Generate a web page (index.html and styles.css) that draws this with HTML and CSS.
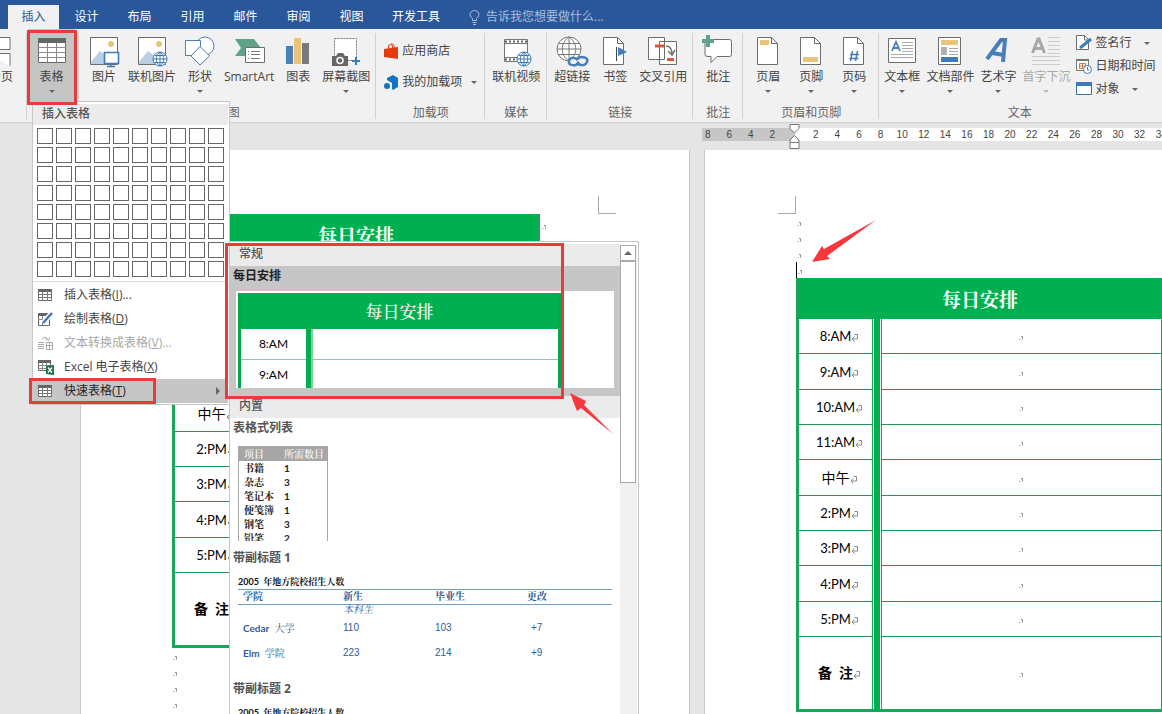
FILE: index.html
```html
<!DOCTYPE html>
<html lang="zh-CN">
<head>
<meta charset="utf-8">
<title>插入表格</title>
<link rel="stylesheet" href="styles.css">
</head>
<body>
<svg class="defs" aria-hidden="true">
  <symbol id="ret" viewBox="0 0 7 9"><path d="M3.500 1.500h3v4.500h-5M3.500 3.500L1 6l2.500 2.500" fill="none" stroke="#8a8a8a"/></symbol>
  <symbol id="mark" viewBox="0 0 5 5"><path d="M2 .5h1.500v3M.5 3.500h1" fill="none" stroke="#8f8f8f"/></symbol>
  <symbol id="globe" viewBox="0 0 16 16"><circle cx="8" cy="8" r="7" fill="#fff"/><path d="M8 1a7 7 0 1 0 0 14a7 7 0 1 0 0-14zM8 1v14M1 8h14M2.500 4.500h11M2.500 11.500h11M8 1c-5 4-5 10 0 14M8 1c5 4 5 10 0 14" fill="none" stroke="currentColor"/></symbol>
  <symbol id="bigglobe" viewBox="0 0 26 26"><circle cx="13" cy="13" r="12" fill="#fff"/><path d="M13 1a12 12 0 1 0 0 24a12 12 0 1 0 0-24zM13 1v24M1 13h24M3 7.500h20M3 18.500h20M13 1c-9 6-9 18 0 24M13 1c9 6 9 18 0 24" fill="none" stroke="currentColor"/></symbol>
  <symbol id="page" viewBox="0 0 30 30"><path d="M4.500.5h14l6 6v21h-20z" fill="#fff" stroke="#6d6d6d"/><path d="M18.500.5v6h6" fill="none" stroke="#6d6d6d"/></symbol>
  <symbol id="grid" viewBox="0 0 14 12"><path d="M.5.5h13v11H.5z" fill="#fff" stroke="#666"/><path d="M0 0h14v3H0z" fill="#666"/><path d="M4.500 3v9M9.500 3v9M0 5.500h14M0 8.500h14" stroke="#777"/></symbol>
  <symbol id="photo" viewBox="0 0 30 30"><path d="M1.500.5h27v27h-27z" fill="#fff" stroke="#6d6d6d"/><circle cx="22" cy="7" r="3" fill="#ebc47a"/><path d="M2 25l9-11 8 6v7H2z" fill="#b9cfe6"/></symbol>
</svg>

<nav class="tabs">
  <button class="tab active">插入</button>
  <button class="tab">设计</button>
  <button class="tab">布局</button>
  <button class="tab">引用</button>
  <button class="tab">邮件</button>
  <button class="tab">审阅</button>
  <button class="tab">视图</button>
  <button class="tab">开发工具</button>
  <label class="tell">
    <svg width="11" height="15" viewBox="0 0 11 15"><path d="M3.500 10.500v-2C-1 5 1.500.5 5.500.5S12 5 7.500 8.500v2zM3.500 12.500h4M4 14.500h3" fill="none" stroke="#a9bfdf"/></svg>
    <input type="text" placeholder="告诉我您想要做什么..." aria-label="告诉我您想要做什么">
  </label>
</nav>

<header class="ribbon">
  <section class="group cut">
    <div class="tools"><button class="tool">
      <svg width="30" height="30" viewBox="0 0 30 30"><path d="M0 .5h24v12H0M0 16.500h24v12" fill="#fff" stroke="#6d6d6d"/></svg>
      <span>分页</span></button></div>
    <h2></h2>
  </section>
  <section class="group first">
    <div class="tools"><button class="tool pressed">
      <svg width="30" height="30" viewBox="0 0 30 30"><path d="M1.500 1.500h27v24h-27z" fill="#fff" stroke="#666"/><path d="M1 1h28v5H1z" fill="#666"/><path d="M10.500 6v19M19.500 6v19M1 10.500h28M1 15.500h28M1 20.500h28" stroke="#8a8a8a"/></svg>
      <span>表格</span><i class="caret"></i></button></div>
    <h2></h2>
  </section>
  <section class="group">
    <div class="tools">
      <button class="tool"><svg width="30" height="30" viewBox="0 0 30 30"><use href="#photo"/><path d="M15.500 15.500h14v11h-14z" fill="#fff" stroke="#3f7ab8" stroke-width="1.600"/><path d="M22 27v2M18 29.500h8" stroke="#3f7ab8" stroke-width="1.500"/></svg><span>图片</span></button>
      <button class="tool"><svg width="30" height="30" viewBox="0 0 30 30" color="#3f7ab8"><use href="#photo"/><use href="#globe" x="15" y="14" width="16" height="16"/></svg><span>联机图片</span></button>
      <button class="tool"><svg width="30" height="30" viewBox="0 0 30 30"><circle cx="20" cy="9" r="9" fill="#fff" stroke="#4a7ebb"/><path d="M.5 3.500h15v15H.5z" fill="#fff" stroke="#4a7ebb"/><path d="M15 9.500l9.500 9.500-9.500 9-9-9z" fill="#fff" stroke="#4a7ebb"/></svg><span>形状</span><i class="caret"></i></button>
      <button class="tool"><svg width="30" height="30" viewBox="0 0 30 30"><path d="M1 2h19l7 9-7 8H1l6-8z" fill="#5fa287"/><path d="M11.500 10.500h19v15h-19z" fill="#fff" stroke="#6d6d6d"/><path d="M17 14.500h9M17 17.500h9M17 21.500h9M14 14.500h1M14 17.500h1M14 21.500h1" stroke="#777"/></svg><span>SmartArt</span></button>
      <button class="tool"><svg width="30" height="30" viewBox="0 0 30 30"><path d="M3 9h7v18H3z" fill="#4a80b8"/><path d="M11 1h7v26h-7z" fill="#ebc47a"/><path d="M19 6h7v21h-7z" fill="#7a7a7a"/></svg><span>图表</span></button>
      <button class="tool"><svg width="30" height="30" viewBox="0 0 30 30"><path d="M3.500 1.500h22v22h-22z" fill="#fff" stroke="#777" stroke-dasharray="2 1"/><path d="M1 19h4l2-3h5l2 3h3v10H1z" fill="#666"/><circle cx="9" cy="23.500" r="3" fill="#666" stroke="#fff" stroke-width="1.500"/><path d="M25 20v8M21 24h8" stroke="#3f7ab8" stroke-width="2"/></svg><span>屏幕截图</span><i class="caret"></i></button>
    </div>
    <h2>插图</h2>
  </section>
  <section class="group">
    <div class="stack addins">
      <button class="line"><svg width="15" height="16" viewBox="0 0 15 16"><path d="M0 6l14-2v12L0 14z" fill="#e43b0c"/><path d="M4.500 6V2.500q2-2 4 0V6M7 1q3-1 3.500 4" fill="none" stroke="#e43b0c"/></svg><span>应用商店</span></button>
      <button class="line"><svg width="15" height="15" viewBox="0 0 15 15"><path d="M3 3l6-3 5 3v9l-5 3-1-1V8L3 5z" fill="#1272c5"/><circle cx="3" cy="11" r="3" fill="#1272c5"/></svg><span>我的加载项</span><i class="caret"></i></button>
    </div>
    <h2>加载项</h2>
  </section>
  <section class="group">
    <div class="tools"><button class="tool media"><svg width="30" height="30" viewBox="0 0 30 30" color="#3f7ab8"><path d="M3.500 2.500h23v22h-23z" fill="#fff" stroke="#777"/><path d="M4 4.500h22M4 22.500h22" stroke="#666" stroke-width="2" stroke-dasharray="2 2"/><path d="M3 6.500h24M3 20.500h24" stroke="#777"/><use href="#globe" x="15" y="14" width="16" height="16"/></svg><span>联机视频</span></button></div>
    <h2>媒体</h2>
  </section>
  <section class="group">
    <div class="tools">
      <button class="tool"><svg width="30" height="30" viewBox="0 0 30 30" color="#777"><use href="#bigglobe" x="-1" y="-1" width="26" height="26"/><path d="M12 20h18v10H12z" fill="#f1f1f1"/><path d="M20 22q-7-3-8 2t7 4l3-3M21 27q7 3 9-2t-7-5l-4 3" fill="none" stroke="#4a7ebb" stroke-width="2.500"/></svg><span>超链接</span></button>
      <button class="tool"><svg width="30" height="30" viewBox="0 0 30 30"><use href="#page" x="-1"/><path d="M16.500 10v14" stroke="#444"/><path d="M18 10l9 5-9 4z" fill="#4a7ebb"/></svg><span>书签</span></button>
      <button class="tool"><svg width="30" height="30" viewBox="0 0 30 30"><path d="M11.500 4.500h17v23h-17zM.5.500h16v22H.5z" fill="#fff" stroke="#6d6d6d"/><path d="M7 9h9M19 22.500h7" stroke="#d95735" stroke-width="3"/><path d="M18 9q6 0 6 9M20 14l4 4 3-5" fill="none" stroke="#777" stroke-width="1.600"/></svg><span>交叉引用</span></button>
    </div>
    <h2>链接</h2>
  </section>
  <section class="group">
    <div class="tools"><button class="tool"><svg width="30" height="30" viewBox="0 0 30 30"><path d="M4.500 2.500h22q2 0 2 2v13q0 2-2 2H14l-6 6v-6H5q-3 0-3-2v-12z" fill="#fff" stroke="#6d6d6d"/><path d="M5-2v12M-1 4h12" stroke="#5fa287" stroke-width="4"/></svg><span>批注</span></button></div>
    <h2>批注</h2>
  </section>
  <section class="group">
    <div class="tools">
      <button class="tool"><svg width="30" height="30" viewBox="0 0 30 30"><use href="#page"/><path d="M7 3h9v5H7z" fill="#ebc47a"/></svg><span>页眉</span><i class="caret"></i></button>
      <button class="tool"><svg width="30" height="30" viewBox="0 0 30 30"><use href="#page"/><path d="M7 20h15v5H7z" fill="#ebc47a"/></svg><span>页脚</span><i class="caret"></i></button>
      <button class="tool"><svg width="30" height="30" viewBox="0 0 30 30"><use href="#page"/><path d="M13.500 14l-2 10M18.500 14l-2 10M11 17.500h9M10.500 21.500h9" stroke="#4a7ebb" stroke-width="1.500"/></svg><span>页码</span><i class="caret"></i></button>
    </div>
    <h2>页眉和页脚</h2>
  </section>
  <section class="group last">
    <div class="tools">
      <button class="tool"><svg width="30" height="30" viewBox="0 0 30 30"><path d="M1.500 1.500h27v24h-27z" fill="#fff" stroke="#6d6d6d"/><path d="M5 14l4-9 4 9M6.500 11h5" fill="none" stroke="#4a7ebb" stroke-width="1.800"/><path d="M15 5.500h11M15 8.500h11M15 11.500h11M15 14.500h11M4 17.500h22M4 20.500h22" stroke="#aaa"/></svg><span>文本框</span><i class="caret"></i></button>
      <button class="tool"><svg width="30" height="30" viewBox="0 0 30 30"><path d="M3.500.5h22v27h-22z" fill="#fff" stroke="#6d6d6d"/><path d="M6 3h17v5H6z" fill="#ebc47a"/><path d="M6 10h6v8H6z" fill="#b0b0b0"/><path d="M14 11.500h9M14 14.500h9M14 17.500h9" stroke="#aaa"/><path d="M6 20h17v5H6z" fill="#3f7ab8"/></svg><span>文档部件</span><i class="caret"></i></button>
      <button class="tool"><svg width="30" height="30" viewBox="0 0 30 30"><path d="M4 22L18 3h4l-2 22M9 16l12 2" fill="none" stroke="#4a7ebb" stroke-width="4"/></svg><span>艺术字</span><i class="caret"></i></button>
      <button class="tool disabled" disabled><svg width="30" height="30" viewBox="0 0 30 30"><path d="M1.500 16L7 2h1l5.500 14M4 11.500h7" fill="none" stroke="#a8a8a8" stroke-width="3"/><path d="M17 .5h12M17 4.500h12M17 8.500h12M17 12.500h12M17 16.500h12M1 19.500h28M1 23.500h28M1 27.500h28" stroke="#ccc"/></svg><span>首字下沉</span><i class="caret"></i></button>
      <div class="stack texts">
        <button class="line"><svg width="16" height="16" viewBox="0 0 16 16"><path d="M.5.5h8l4 4v10H.5z" fill="#fff" stroke="#6d6d6d"/><path d="M8.500 1v4h4" fill="none" stroke="#6d6d6d"/><path d="M4 13L15 4" stroke="#3f7ab8" stroke-width="3"/></svg><span>签名行</span><i class="caret"></i></button>
        <button class="line"><svg width="16" height="16" viewBox="0 0 16 16"><path d="M.5 1.500h12v11H.5z" fill="#fff" stroke="#777"/><path d="M0 1h13v2H0z" fill="#777"/><path d="M3.500 5.500h6v5h-6zM3 8h7M6.500 5v6" fill="none" stroke="#d9773a"/><circle cx="11.500" cy="11.500" r="4" fill="#fff" stroke="#3f7ab8"/><path d="M11.500 9v3h2" fill="none" stroke="#3f7ab8"/></svg><span>日期和时间</span></button>
        <button class="line"><svg width="16" height="16" viewBox="0 0 16 16"><path d="M.5 1.500h15v12H.5z" fill="#fff" stroke="#3f6f9f"/><path d="M0 1h16v4H0z" fill="#3f7ab8"/></svg><span>对象</span><i class="caret"></i></button>
      </div>
    </div>
    <h2>文本</h2>
  </section>
</header>

<main class="workspace">
  <div class="ruler">
    <div class="ruler-margin"><div class="ticks neg"><span>8</span><span>6</span><span>4</span><span>2</span></div></div>
    <div class="ruler-body"><div class="ticks pos"><span>2</span><span>4</span><span>6</span><span>8</span><span>10</span><span>12</span><span>14</span><span>16</span><span>18</span><span>20</span><span>22</span><span>24</span><span>26</span><span>28</span><span>30</span><span>32</span><span>34</span></div></div>
    <svg class="indent" width="11" height="26" viewBox="0 0 11 26"><path d="M1 .5h9v4L5.500 9 1 4.500zM1 24.500v-6h9v6zM1 18.500V16l4.500-4.500L10 16v2.500" fill="#fff" stroke="#777"/></svg>
  </div>
  <article class="page one">
    <div class="corners"><i class="corner left"></i><i class="corner right"></i></div>
    <div class="flow" data-schedule></div>
    <div class="paras"><p><svg><use href="#mark"/></svg></p><p><svg><use href="#mark"/></svg></p><p><svg><use href="#mark"/></svg></p><p><svg><use href="#mark"/></svg></p></div>
  </article>
  <article class="page two">
    <div class="corners"><i class="corner left"></i></div>
    <div class="paras"><p><svg><use href="#mark"/></svg></p><p><svg><use href="#mark"/></svg></p><p><svg><use href="#mark"/></svg></p><p class="cursor"><svg><use href="#mark"/></svg></p></div>
    <div class="flow" data-schedule></div>
  </article>
</main>

<template id="schedule">
  <table class="schedule">
    <colgroup><col class="col-time"><col class="col-bar"><col></colgroup>
    <thead><tr><th colspan="3">每日安排</th></tr></thead>
    <tbody></tbody>
  </table>
  <svg class="row-end"><use href="#mark"/></svg>
</template>

<aside class="menu">
  <h3>插入表格</h3>
  <div class="picker"></div>
  <button class="item"><svg width="14" height="12"><use href="#grid"/></svg><span>插入表格(<u>I</u>)...</span></button>
  <button class="item"><svg width="15" height="14" viewBox="0 0 15 14"><path d="M.5 1.500h11v12H.5z" fill="#fff" stroke="#666"/><path d="M0 1h12v3H0z" fill="#666"/><path d="M4.500 4v9M0 7.500h8" stroke="#888"/><path d="M5 11l8-9" stroke="#fff" stroke-width="5"/><path d="M5 11l9-10" stroke="#3f7ab8" stroke-width="2.500"/></svg><span>绘制表格(<u>D</u>)</span></button>
  <button class="item off" disabled><svg width="15" height="14" viewBox="0 0 15 14"><path d="M0 6.500h6M0 8.500h6M0 10.500h6M0 12.500h6M8.500 6.500h6v7h-6zM11.500 6v8M8 9.500h7M4 3q4-4 6 1M7.500 2.500l3 2 1-3" fill="none" stroke="#aaa"/></svg><span>文本转换成表格(<u>V</u>)...</span></button>
  <button class="item"><svg width="16" height="16" viewBox="0 0 16 16"><path d="M.5 1.500h12v10H.5z" fill="#fff" stroke="#666"/><path d="M0 1h13v3H0z" fill="#666"/><path d="M4.500 4v8M8.500 4v8M0 6.500h12M0 9.500h12" stroke="#888"/><path d="M8 7l8-1v10l-8-1z" fill="#1f7246"/><path d="M10 8.500l4 5M14 8.500l-4 5" stroke="#fff" stroke-width="1.300"/></svg><span>Excel 电子表格(<u>X</u>)</span></button>
  <button class="item hot"><svg width="14" height="12"><use href="#grid"/></svg><span>快速表格(<u>T</u>)</span><i class="more"></i></button>
</aside>

<aside class="gallery">
  <div class="list">
    <h3>常规</h3>
    <section class="entry selected">
      <h4>每日安排</h4>
      <div class="preview">
        <table class="mini">
          <colgroup><col class="col-time"><col class="col-bar"><col></colgroup>
          <thead><tr><th colspan="3">每日安排</th></tr></thead>
          <tbody>
            <tr><td>8:AM</td><td class="bar" rowspan="2"></td><td></td></tr>
            <tr><td>9:AM</td><td></td></tr>
          </tbody>
        </table>
      </div>
    </section>
    <h3>内置</h3>
    <section class="entry">
      <h4>表格式列表</h4>
      <div class="clip">
        <table class="items">
          <thead><tr><th>项目</th><th>所需数目</th></tr></thead>
          <tbody>
            <tr><td>书籍</td><td>1</td></tr>
            <tr><td>杂志</td><td>3</td></tr>
            <tr><td>笔记本</td><td>1</td></tr>
            <tr><td>便笺簿</td><td>1</td></tr>
            <tr><td>钢笔</td><td>3</td></tr>
            <tr><td>铅笔</td><td>2</td></tr>
          </tbody>
        </table>
      </div>
    </section>
    <section class="entry sub">
      <h4>带副标题 1</h4>
      <table class="college">
        <caption>2005&nbsp; 年地方院校招生人数</caption>
        <thead><tr><th>学院</th><th>新生</th><th>毕业生</th><th>更改</th></tr></thead>
        <tbody>
          <tr class="kind"><td></td><td>本科生</td><td></td><td></td></tr>
          <tr><td><b>Cedar</b>&nbsp; 大学</td><td>110</td><td>103</td><td>+7</td></tr>
          <tr><td><b>Elm</b>&nbsp; 学院</td><td>223</td><td>214</td><td>+9</td></tr>
        </tbody>
      </table>
    </section>
    <section class="entry sub">
      <h4>带副标题 2</h4>
      <table class="college">
        <caption>2005&nbsp; 年地方院校招生人数</caption>
      </table>
    </section>
  </div>
  <div class="scroll"><button class="up" aria-label="向上滚动"></button><div class="thumb"></div></div>
</aside>

<div class="frame frame-table"></div>
<div class="frame frame-quick"></div>
<div class="frame frame-daily"></div>
<svg class="arrow arrow-a" width="64" height="43" viewBox="0 0 64 43"><path d="M0 42l10-16 2 3L64 0 15 36l3 3z" fill="#f8373a"/></svg>
<svg class="arrow arrow-b" width="43" height="41" viewBox="0 0 43 41"><path d="M0 0l16 8-2 4 29 29-32-26-4 3z" fill="#f8373a"/></svg>

<script src="app.js"></script>
</body>
</html>
```
FILE: styles.css
```css
* { box-sizing: border-box; }
html, body { height: 100%; }
body {
  margin: 0;
  display: flex;
  flex-direction: column;
  position: relative;
  overflow: hidden;
  background: #e5e5e5;
  color: #444;
  font: 12px/18px "Open Sans", "Noto Sans CJK SC", sans-serif;
}
button, input { font: inherit; color: inherit; border: 0; background: none; padding: 0; margin: 0; }
h2, h3, h4, p { margin: 0; font: inherit; }
.defs { position: absolute; width: 0; height: 0; }

/* tab strip */
.tabs { display: flex; height: 29px; flex: none; padding: 5px 0 0 7px; background: #2a579a; color: #fff; }
.tab { min-width: 53px; padding: 0 14px; height: 24px; line-height: 22px; }
.tab.active { min-width: 51px; margin: 0 1px; padding: 0; background: #f1f1f1; color: #2a579a; }
.tell { display: flex; align-items: center; gap: 6px; margin-left: 15px; flex: 1; }
.tell input { flex: 1; min-width: 0; outline: 0; }
.tell input::placeholder { color: #a9bfdf; opacity: 1; }

/* ribbon */
.ribbon { display: flex; flex: none; height: 94px; background: #f1f1f1; border-bottom: 1px solid #d2d2d2; }
.group { flex: none; display: flex; flex-direction: column; justify-content: space-between; padding: 0 4px; position: relative; }
.group::after { content: ""; position: absolute; right: 0; top: 4px; bottom: 3px; width: 1px; background: #d2d2d2; }
.group.last { flex: 1; min-width: 0; padding-left: 2px; }
.group.last::after { display: none; }
.group h2 { text-align: center; color: #666; min-height: 18px; }
.group.cut { width: 27px; align-items: flex-end; padding: 0 5px 0 0; overflow: hidden; }
.group.first { padding: 0 4px 0 1px; }
.tools { display: flex; gap: 1px; }
.tool { display: flex; flex-direction: column; align-items: center; flex: none; min-width: 42px; height: 73px; padding: 8px 2px 0; white-space: nowrap; }
.tool svg { overflow: visible; flex: none; margin-bottom: 1px; }
.tool.pressed { min-width: 47px; background: #c5c5c5; }
.tool.media { min-width: 54px; }
.tool.disabled { color: #a8a8a8; }
.caret { width: 0; height: 0; border: 3px solid transparent; border-top-color: #666; border-bottom: 0; margin-top: 4px; }
.disabled .caret { border-top-color: #bbb; }
.stack { display: flex; flex-direction: column; }
.line { display: flex; align-items: center; white-space: nowrap; text-align: left; }
.line .caret { margin: 0 0 0 10px; }
.addins { padding: 13px 4px 0; gap: 13px; }
.addins .line { gap: 3px; }
.addins .caret { margin-left: 6px; }
.texts { padding: 5px 0 0 3px; gap: 5px; }
.texts .line { gap: 3px; }

/* document area */
.workspace {
  flex: 1;
  min-height: 0;
  display: grid;
  grid-template-columns: 610px minmax(0, 1fr);
  grid-template-rows: 13px minmax(0, 1fr);
  gap: 9px 14px;
  padding: 5px 0 0 80px;
}
.ruler { grid-column: 2; position: relative; margin-left: -2px; display: flex; font: 10px/13px "Liberation Sans", sans-serif; color: #444; }
.ruler-margin { width: 93px; flex: none; background: #c6c6c6; }
.ruler-body { flex: 1; min-width: 0; background: #fff; overflow: hidden; }
.ticks { display: grid; text-align: center; }
.neg { grid-template-columns: repeat(4, 1fr); margin: 0 12px 0 -5px; }
.pos { grid-template-columns: repeat(17, 1fr); width: 367px; margin-left: 10px; }
.indent { position: absolute; left: 87px; top: -4px; }
.page { grid-row: 2; background: #fff; padding: 46px 73px 0; border: solid #c8c8c8; border-width: 0 1px; overflow: hidden; }
.page.two { padding-right: 0; border-right: 0; }
.corners { display: flex; justify-content: space-between; }
.corner { width: 18px; height: 18px; border: solid #a9a9a9; border-width: 0 0 1px 0; }
.corner.left { border-right-width: 1px; }
.corner.right { border-left-width: 1px; }
.flow { display: flex; margin-left: 18px; }
.paras { margin-left: 18px; }
.paras p { height: 16px; padding: 4px 0 0 1px; display: flex; align-items: center; }
.paras svg, .row-end, .open svg { width: 5px; height: 5px; flex: none; }
.row-end { margin: 11px 0 0 2px; }
.paras .cursor { border-left: 1px solid #000; padding-left: 1px; }

.schedule { width: 368px; flex: none; border-spacing: 0; border: 3px solid #15a85a; border-top: 0; table-layout: fixed; color: #000; font: 13px/20px "Lato", "Noto Sans CJK SC", sans-serif; }
.schedule th { height: 41px; padding: 0; background: #00b050; color: #fff; font: bold 19px/24px "Noto Serif CJK SC", "Noto Sans CJK SC", sans-serif; }
.schedule td { height: 35px; padding: 0; text-align: center; vertical-align: middle; border-bottom: 1px solid #24965c; }
.schedule tr:nth-child(3n+2) td { height: 36px; }
.schedule .col-time { width: 74px; }
.schedule .col-bar { width: 8px; }
.schedule .time { padding-left: 7px; border-right: 1px solid #15a85a; white-space: nowrap; }
.schedule .time svg { width: 7px; height: 9px; vertical-align: -1px; }
.schedule .bar { border: solid #fff; border-width: 0 1px; background: #00b050; }
.schedule .open { border-left: 1px solid #15a85a; }
.schedule .cjk { font-size: 14px; }
.schedule tr.note td { height: 72px; font-weight: bold; border-bottom: 0; }

/* table menu */
.menu { position: absolute; left: 32px; top: 101px; width: 198px; padding: 2px 1px 1px 0; background: #fff; border: 1px solid #c6c6c6; }
.menu h3, .gallery h3 { background: #ebebeb; color: #555; font-weight: 500; padding: 0 9px; }
.menu h3 { height: 21px; line-height: 19px; }
.picker { display: grid; grid-template-columns: repeat(10, 16px); gap: 3px; padding: 3px 4px 4px; border-bottom: 1px solid #ddd; margin-bottom: 1px; }
.picker button { height: 16px; border: 1px solid #666; background: #fff; }
.item { display: flex; align-items: center; width: 100%; height: 24px; padding-left: 5px; }
.item svg { flex: none; margin-right: auto; }
.item span { width: 159px; text-align: left; white-space: nowrap; flex: none; margin-right: 5px; }
.item.off { color: #a8a8a8; }
.item.hot { background: #c6c6c6; color: #222; position: relative; }
.more { position: absolute; right: 8px; border: 4px solid transparent; border-left-color: #666; border-right: 0; }

/* quick-table gallery */
.gallery { position: absolute; left: 229px; top: 241px; bottom: 0; width: 410px; display: flex; background: #fff; border: 1px solid #c6c6c6; border-bottom: 0; overflow: hidden; }
.list { flex: 1; padding-top: 2px; min-width: 0; }
.gallery h3 { height: 22px; line-height: 20px; }
.entry { padding: 0 6px 7px; }
.entry h4 { font-weight: 700; color: #555; height: 25px; line-height: 20px; margin-left: -3px; }
.entry.selected { background: #c6c6c6; padding-bottom: 8px; }
.selected h4 { color: #222; }
.preview { height: 97px; background: #fff; padding: 2px 2px 0; overflow: hidden; }
.mini { width: 323px; table-layout: fixed; border-spacing: 0; border: solid #00a651; border-width: 0 3px; color: #000; font: 12px/20px "Lato", "Noto Sans CJK SC", sans-serif; }
.mini th { height: 36px; padding: 0; background: #00b050; color: #fff; font: 500 17px/24px "Noto Serif CJK SC", "Noto Sans CJK SC", sans-serif; }
.mini td { height: 31px; padding: 0; text-align: center; border-bottom: 1px solid #8fc9ab; }
.mini .col-time { width: 65px; }
.mini .col-bar { width: 7px; }
.mini .bar { border: 0; border-right: 2px solid #7fd0a0; background: #00b050; }
.clip { height: 95px; margin: 3px 0 0 2px; overflow: hidden; }
.items { width: 90px; border-spacing: 0; border: solid #a6a6a6; border-width: 0 1px; color: #222; font: bold 10px/14px "Lato", "Noto Serif CJK SC", "Noto Sans CJK SC", sans-serif; }
.items th { background: #a6a6a6; color: #fff; font-weight: 500; height: 15px; }
.items th, .items td { text-align: left; padding: 0 0 0 5px; white-space: nowrap; }
.items th + th, .items td + td { padding-left: 8px; }
.sub { padding-bottom: 14px; }
.sub h4 { height: 27px; }
.college { width: calc(100% - 4px); margin-left: 2px; table-layout: fixed; border-spacing: 0; color: #2f6096; font: 10px/14px "Liberation Sans", "Noto Serif CJK SC", "Noto Sans CJK SC", sans-serif; }
.college caption { text-align: left; color: #111; font: bold 9px/14px "Lato", "Noto Serif CJK SC", sans-serif; height: 14px; white-space: nowrap; }
.college th { text-align: left; border: solid #6f9fc9; border-width: 1px 0; font-weight: bold; height: 16px; padding: 0 0 0 5px; }
.college td { height: 25px; padding: 0 0 0 5px; }
.college td:first-child { font-family: "Lato", "Noto Serif CJK SC", sans-serif; }
.college td:last-child { padding-left: 9px; }
.college .kind td { height: 10px; line-height: 10px; font-style: italic; }
.college th:first-child { width: 100px; }
.college th:nth-child(2), .college th:nth-child(3) { width: 92px; }
.scroll { width: 17px; margin-top: 3px; margin-right: 1px; padding-right: 1px; background: #f1f1f1; }
.up { display: flex; align-items: center; justify-content: center; width: 100%; height: 16px; border: 1px solid #aaa; background: #fff; }
.up::before { content: ""; border: 4px solid transparent; border-bottom-color: #666; border-top: 0; }
.thumb { height: 222px; border: 1px solid #aaa; background: #fff; }

/* callouts */
.frame { position: absolute; border: 3px solid #ea3b3b; pointer-events: none; }
.frame-table { left: 27px; top: 30px; width: 50px; height: 75px; }
.frame-quick { left: 29px; top: 378px; width: 127px; height: 26px; }
.frame-daily { left: 225px; top: 243px; width: 339px; height: 156px; }
.arrow { position: absolute; }
.arrow-a { left: 812px; top: 220px; }
.arrow-b { left: 570px; top: 393px; }
```
FILE: app.js
```javascript
const times = ["8:AM", "9:AM", "10:AM", "11:AM", "中午", "2:PM", "3:PM", "4:PM", "5:PM", "备&nbsp; 注"];

const rows = times.map((time, i) => `
  <tr class="${i === times.length - 1 ? "note" : "slot"}">
    <td class="time${time.includes("M") ? "" : " cjk"}">${time}<svg><use href="#ret"/></svg></td>
    ${i === 0 ? `<td class="bar" rowspan="${times.length}"></td>` : ""}
    <td class="open"><svg><use href="#mark"/></svg></td>
  </tr>`).join("");

const template = document.getElementById("schedule");
document.querySelectorAll("[data-schedule]").forEach((host) => {
  const copy = template.content.cloneNode(true);
  copy.querySelector("tbody").innerHTML = rows;
  host.append(copy);
});

const picker = document.querySelector(".picker");
for (let row = 1; row <= 8; row += 1) {
  for (let col = 1; col <= 10; col += 1) {
    const cell = document.createElement("button");
    cell.setAttribute("aria-label", `${col}x${row} 表格`);
    picker.append(cell);
  }
}
```
